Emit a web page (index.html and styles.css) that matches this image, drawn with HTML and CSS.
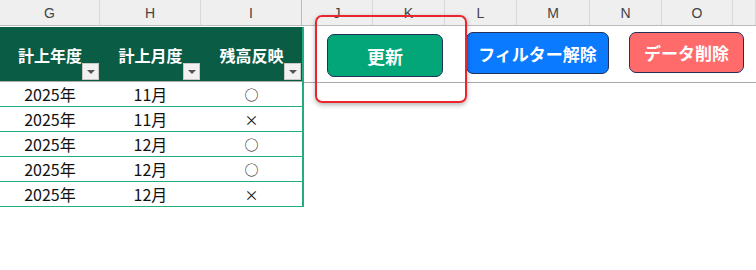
FILE: index.html
```html
<!DOCTYPE html>
<html lang="ja">
<head>
  <meta charset="UTF-8" />
  <meta name="viewport" content="width=device-width, initial-scale=1.0"/>
  <title>残高反映シート</title>
  <link rel="stylesheet" href="styles.css">
</head>
<body>
  <div class="colbar">
    <div class="col w-g">G</div>
    <div class="col w-h">H</div>
    <div class="col w-i">I</div>
    <div class="col w-j">J</div>
    <div class="col w-k">K</div>
    <div class="col w-l">L</div>
    <div class="col w-m">M</div>
    <div class="col w-n">N</div>
    <div class="col w-o">O</div>
    <div class="col w-p"></div>
  </div>
  <div class="sheet">
    <div class="table">
      <div class="thead">
        <div class="th w-g">計上年度<span class="filter"></span></div>
        <div class="th w-h">計上月度<span class="filter"></span></div>
        <div class="th w-i">残高反映<span class="filter"></span></div>
      </div>
      <div class="tr"><div class="td w-g">2025年</div><div class="td w-h">11月</div><div class="td w-i mark">○</div></div>
      <div class="tr"><div class="td w-g">2025年</div><div class="td w-h">11月</div><div class="td w-i mark">×</div></div>
      <div class="tr"><div class="td w-g">2025年</div><div class="td w-h">12月</div><div class="td w-i mark">○</div></div>
      <div class="tr"><div class="td w-g">2025年</div><div class="td w-h">12月</div><div class="td w-i mark">○</div></div>
      <div class="tr"><div class="td w-g">2025年</div><div class="td w-h">12月</div><div class="td w-i mark">×</div></div>
    </div>
    <div class="actions">
      <button class="btn btn-update">更新</button>
      <button class="btn btn-filter">フィルター解除</button>
      <button class="btn btn-delete">データ削除</button>
    </div>
  </div>
  <!-- 選択枠 -->
  <div class="highlight"></div>
</body>
</html>
```

FILE: styles.css
```css
* { box-sizing: border-box; }
html, body { margin: 0; height: 100%; }
body {
  position: relative;
  background: #fff;
  font-family: "Noto Sans CJK JP", "Noto Sans", sans-serif;
  color: #111;
  overflow: hidden;
}
.w-g { width: 100px; }
.w-h { width: 101px; }
.w-i { width: 101px; }
.w-j { width: 71px; }
.w-k { width: 72px; }
.w-l { width: 72px; }
.w-m { width: 73px; }
.w-n { width: 72px; }
.w-o { width: 71px; }
.w-p { flex: 1; }

.colbar {
  display: flex;
  height: 26px;
  background: #efefef;
  border-bottom: 1px solid #bcbcbc;
  margin-bottom: 1px;
}
.col {
  display: flex;
  align-items: center;
  justify-content: center;
  border-right: 1px solid #d8d8d8;
  font-family: "Liberation Sans", Arial, sans-serif;
  font-size: 14px;
  color: #444;
}
.col.w-i { border-right-color: #bcbcbc; }

.sheet { display: flex; }
.table {
  width: 304px;
  border-right: 2px solid #1fae7c;
}
.thead {
  display: flex;
  height: 55px;
  background: #0b5c45;
  border-bottom: 1px solid #a9a9a9;
}
.th {
  position: relative;
  display: flex;
  align-items: center;
  justify-content: center;
  padding-top: 2px;
  color: #fff;
  font-weight: bold;
  font-size: 16px;
}
.filter {
  position: absolute;
  right: 1px;
  bottom: 1px;
  width: 17px;
  height: 17px;
  background: #f1f1f1;
  border: 1px solid #c9c9c9;
}
.filter::after {
  content: "";
  position: absolute;
  left: 4px;
  top: 6px;
  border-left: 4px solid transparent;
  border-right: 4px solid transparent;
  border-top: 4px solid #555;
}
.tr {
  display: flex;
  height: 25px;
  border-bottom: 1px solid #1fae7c;
}
.td {
  display: flex;
  align-items: center;
  justify-content: center;
  font-size: 16px;
}
.td.mark { font-size: 14px; }

.actions {
  flex: 1;
  display: flex;
  align-items: flex-start;
  height: 56px;
  border-bottom: 1px solid #a9a9a9;
}
.btn {
  font-family: inherit;
  font-weight: bold;
  color: #fff;
  border: 1.5px solid #22305a;
  border-radius: 7px;
  font-size: 17px;
  padding: 0;
  cursor: pointer;
}
.btn-update {
  margin: 7px 0 0 23px;
  width: 116px;
  height: 43px;
  background: #02a677;
  font-size: 18px;
}
.btn-filter {
  margin: 5px 0 0 23px;
  width: 143px;
  height: 42px;
  background: #0a7aff;
}
.btn-delete {
  margin: 5px 0 0 20px;
  width: 115px;
  height: 41px;
  background: #ff6b6b;
}
.highlight {
  position: absolute;
  left: 315px;
  top: 15px;
  width: 152px;
  height: 88px;
  border: 2px solid #e8262b;
  border-radius: 7px;
  box-shadow: 0 2px 5px rgba(0,0,0,0.3);
}
```
